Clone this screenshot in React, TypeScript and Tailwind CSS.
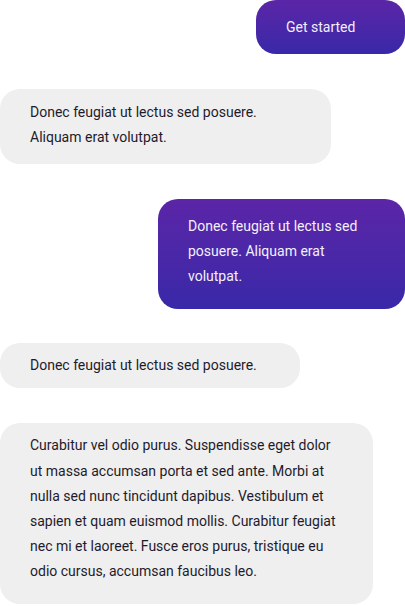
import React from "react";

type Msg = {
  from: "me" | "them";
  text: string;
  box: string;
};

const messages: Msg[] = [
  { from: "me", text: "Get started", box: "w-[149px] pt-[15px] pb-[14px]" },
  {
    from: "them",
    text: "Donec feugiat ut lectus sed posuere. Aliquam erat volutpat.",
    box: "w-[331px] mt-[35px] pt-[11px] pb-[13px]",
  },
  {
    from: "me",
    text: "Donec feugiat ut lectus sed posuere. Aliquam erat volutpat.",
    box: "w-[247px] mt-[35px] pt-[15px] pb-[20px]",
  },
  {
    from: "them",
    text: "Donec feugiat ut lectus sed posuere.",
    box: "w-[300px] mt-[34px] pt-[10px] pb-[10px]",
  },
  {
    from: "them",
    text: "Curabitur vel odio purus. Suspendisse eget dolor ut massa accumsan porta et sed ante. Morbi at nulla sed nunc tincidunt dapibus. Vestibulum et sapien et quam euismod mollis. Curabitur feugiat nec mi et laoreet. Fusce eros purus, tristique eu odio cursus, accumsan faucibus leo.",
    box: "w-[373px] mt-[35px] pt-[10px] pb-[19px]",
  },
];

function Bubble({ msg }: { msg: Msg }) {
  const mine = msg.from === "me";
  return (
    <div
      className={`${msg.box} ${
        mine
          ? "self-end bg-gradient-to-b from-[#5b25a7] to-[#3828a8] text-[#f3f0fb]"
          : "self-start bg-[#efefef] text-[#1e1b2c]"
      } rounded-[20px] px-[30px] text-[14px] leading-[25.2px]`}
    >
      {msg.text}
    </div>
  );
}

export default function App() {
  return (
    <div
      className="w-[405px] h-[606px] overflow-hidden bg-white flex flex-col"
      style={{ fontFamily: "Roboto, 'Noto Sans', sans-serif" }}
    >
      {messages.map((m, i) => (
        <Bubble key={i} msg={m} />
      ))}
    </div>
  );
}
